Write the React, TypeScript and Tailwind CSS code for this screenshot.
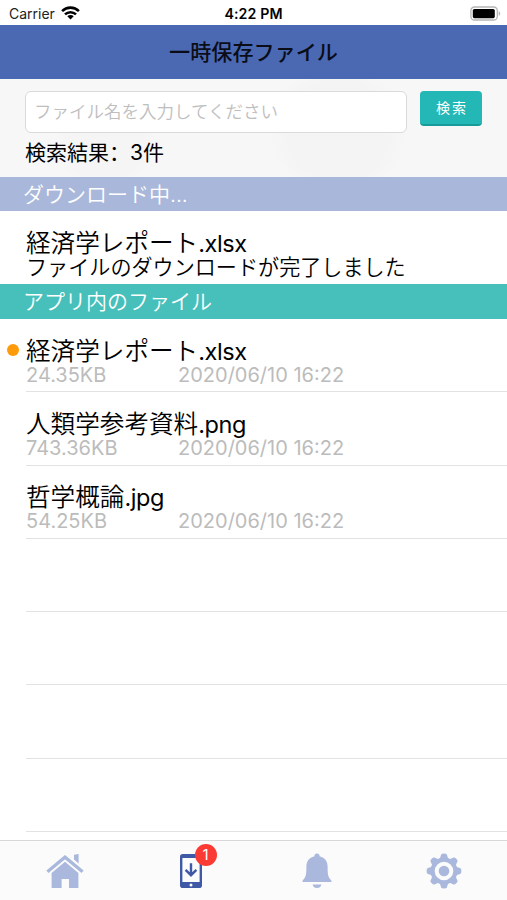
// Temporary saved files screen
import { useState } from "react";

const files = [
  { name: "経済学レポート", ext: ".xlsx", size: "24.35KB", date: "2020/06/10 16:22", unread: true },
  { name: "人類学参考資料", ext: ".png", size: "743.36KB", date: "2020/06/10 16:22", unread: false },
  { name: "哲学概論", ext: ".jpg", size: "54.25KB", date: "2020/06/10 16:22", unread: false },
];

const emptyRows = [0, 1, 2, 3];
const teeth = [0, 45, 90, 135, 180, 225, 270, 315];

function WifiIcon() {
  return (
    <svg className="mb-[2px] ml-[6px] h-[14px] w-[19px]" viewBox="0 0 19 14">
      <g fill="none" stroke="#000" strokeWidth="2.6">
        <path d="M1.1 5.1a12 12 0 0 1 16.8 0" />
        <path d="M4 8.4a8 8 0 0 1 11 0" />
      </g>
      <path d="M6.3 10.3a4.6 4.6 0 0 1 6.4 0L9.5 13.6z" />
    </svg>
  );
}

function BatteryIcon() {
  return (
    <svg className="h-[15px] w-[31px]" viewBox="0 0 31 15">
      <rect x="0.9" y="1" width="26.4" height="13" rx="3.6" fill="#fff" stroke="#b5b5b5" strokeWidth="1.3" />
      <rect x="2.8" y="3" width="22" height="9.2" rx="1.6" />
      <path d="M28.7 5.2c2 .6 2 4 0 4.6z" fill="#b5b5b5" />
    </svg>
  );
}

function HomeIcon() {
  return (
    <svg className="ml-[3px] h-[36px] w-[38px]" viewBox="0 0 38 36" fill="#a9b8dc">
      <path d="M28 1.8l4.6-.8v9.4L28 6.6z" />
      <path d="M1.4 18.8L19 4.2l17.6 14.6" fill="none" stroke="#a9b8dc" strokeWidth="3.2" />
      <path d="M5.6 20L19 8.8 32.4 20v15h-9.4v-9h-7.4v9h-10z" />
    </svg>
  );
}

function PhoneIcon() {
  return (
    <svg className="h-[36px] w-[24px]" viewBox="0 0 24 36">
      <rect x="1" y="1" width="22" height="34" rx="2.8" fill="#3f59a6" />
      <rect x="3.4" y="5" width="17.2" height="24" fill="#fcfcfc" />
      <path d="M12 10.2v11.6M6.6 16.8l5.4 5.4 5.4-5.4" fill="none" stroke="#3f59a6" strokeWidth="2.4" />
      <circle cx="12" cy="32" r="1.5" fill="#fff" />
    </svg>
  );
}

function BellIcon() {
  return (
    <svg className="h-[36px] w-[30px]" viewBox="0 0 30 36" fill="#a9b8dc">
      <path d="M12.4 3.2a2.6 2.6 0 0 1 5.2 0C23 4.6 25.6 8.6 25.6 13.4c0 7.4.4 11 3.8 14v1.6H.6v-1.6c3.4-3 3.8-6.6 3.8-14 0-4.8 2.6-8.8 8-10.2z" />
      <path d="M10.6 31.4h8.8c-.6 4.8-8.2 4.8-8.8 0z" />
    </svg>
  );
}

function GearIcon() {
  return (
    <svg className="h-[36px] w-[36px]" viewBox="-18 -18 36 36" fill="#a9b8dc">
      {teeth.map((angle) => (
        <path
          key={angle}
          d="M-4.6 -11L-2.9 -16.2Q-2.4 -17.4 0 -17.4T2.9 -16.2L4.6 -11z"
          transform={`rotate(${angle})`}
        />
      ))}
      <circle r="11.4" fill="none" stroke="#a9b8dc" strokeWidth="4.2" />
      <circle r="5.3" />
    </svg>
  );
}

function FileName({ name, ext }: { name: string; ext: string }) {
  return (
    <p className="text-[24.6px] leading-[25px] font-[350]">
      {name}
      <span className="text-[23.5px] font-normal tracking-[-0.4px]">{ext}</span>
    </p>
  );
}

export default function App() {
  const [keyword, setKeyword] = useState("");

  return (
    <div className="flex h-[900px] w-[507px] flex-col overflow-hidden bg-white font-['Inter','Noto_Sans_CJK_JP',sans-serif] text-black">
      <div className="grid h-[25px] shrink-0 grid-cols-3 items-center pt-[2px] pr-[6px] pl-[9px]">
        <div className="flex items-center text-[14px] leading-[20px] text-[#222]">
          Carrier
          <WifiIcon />
        </div>
        <div className="-ml-[3px] text-center text-[14.2px] leading-[20px] font-semibold tracking-[0.1px]">
          4:22 PM
        </div>
        <div className="flex justify-end">
          <BatteryIcon />
        </div>
      </div>

      <header className="flex h-[54px] shrink-0 items-center justify-center bg-[#4b69b3] pt-[2px]">
        <h1 className="text-[21.1px] leading-[30px] font-medium text-[#0a0d18]">一時保存ファイル</h1>
      </header>

      <div className="h-[98px] shrink-0 bg-[#f7f7f7] bg-[radial-gradient(circle_at_338px_52px,#f4f4f4_50px,transparent_68px),radial-gradient(circle_at_105px_62px,#f5f5f5_38px,transparent_50px)] pt-[12px] pl-[25px]">
        <div className="flex items-start gap-[13px]">
          <input
            className="h-[42px] w-[382px] rounded-[6px] border-[1.5px] border-[#dadada] bg-white px-[8px] pb-[1px] text-[17.5px] font-[350] outline-none placeholder:text-[#bebebe]"
            placeholder="ファイル名を入力してください"
            type="text"
            value={keyword}
            onChange={(e) => setKeyword(e.target.value)}
          />
          <button className="h-[35px] w-[62px] rounded-[4px] border-b-2 border-[#179b98] bg-[#23b7b5] pl-[2px] text-[14px] tracking-[2px] text-white">
            検索
          </button>
        </div>
        <p className="mt-[5px] text-[21px] leading-[30px]">
          検索結果<span lang="zh-CN" className="font-['Noto_Sans_CJK_SC',sans-serif] leading-none">：</span>3件
        </p>
      </div>

      <h2 className="h-[34px] shrink-0 bg-[#a9b8da] pl-[23px] text-[21px] leading-[36px] font-[350] text-white">
        ダウンロード中...
      </h2>
      <div className="h-[73px] shrink-0 pt-[20px] pl-[26px]">
        <FileName name="経済学レポート" ext=".xlsx" />
        <p className="text-[21.1px] leading-[23px] font-[350]">ファイルのダウンロードが完了しました</p>
      </div>

      <h2 className="h-[35px] shrink-0 bg-[#47bfbb] pl-[23px] text-[21px] leading-[36px] font-[350] text-white">
        アプリ内のファイル
      </h2>
      <ul className="min-h-0 flex-1">
        {files.map((file) => (
          <li key={file.name} className="flex h-[73.3px]">
            <div className="flex w-[26px] shrink-0 justify-center pt-[25px]">
              {file.unread && <span className="h-[12px] w-[12px] rounded-full bg-[#ff9b0a]" />}
            </div>
            <div className="flex-1 border-b border-[#e2e2e2] pt-[19.5px]">
              <FileName name={file.name} ext={file.ext} />
              <p className="flex text-[20px] leading-[22px] text-[#bcbcbc]">
                <span className="w-[152px]">{file.size}</span>
                <span>{file.date}</span>
              </p>
            </div>
          </li>
        ))}
        {emptyRows.map((row) => (
          <li key={row} className="ml-[26px] h-[73.3px] border-b border-[#e2e2e2]" />
        ))}
      </ul>

      <nav className="grid h-[60px] shrink-0 grid-cols-4 border-t border-[#d8d8d8] bg-[#fbfbfb] pt-[12px]">
        <a className="flex justify-center">
          <HomeIcon />
        </a>
        <a className="flex justify-center pl-[1px]">
          <span className="relative h-[36px]">
            <PhoneIcon />
            <span className="absolute -top-[9px] left-[16px] h-[22px] w-[22px] rounded-full bg-[#fb3b33] text-center text-[15px] leading-[22px] text-white">
              1
            </span>
          </span>
        </a>
        <a className="flex justify-center">
          <BellIcon />
        </a>
        <a className="flex justify-center">
          <GearIcon />
        </a>
      </nav>
    </div>
  );
}
